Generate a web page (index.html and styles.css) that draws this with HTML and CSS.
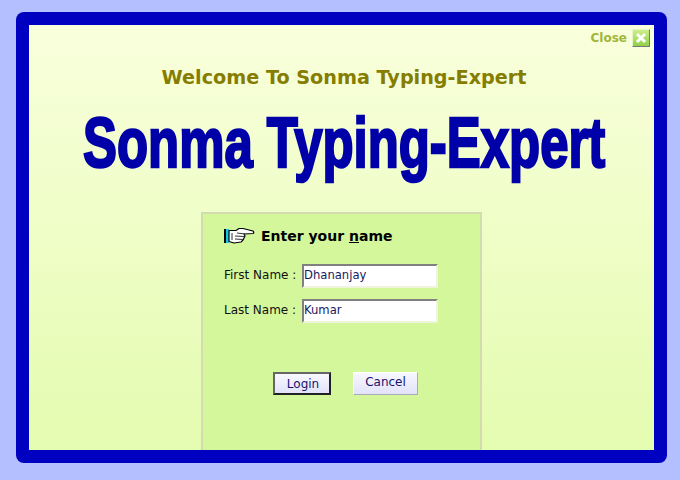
FILE: index.html
```html
<!DOCTYPE html>
<html lang="en">
<head>
<meta charset="utf-8">
<title>Sonma Typing-Expert</title>
<link rel="stylesheet" href="styles.css">
</head>
<body>
<main class="frame">
  <div class="inner">
    <div class="close-row">
      <span class="close-label">Close</span>
      <span class="close-btn"><svg width="14" height="14" viewBox="0 0 14 14"><path d="M3 3 L11 11 M11 3 L3 11" stroke="#fff" stroke-width="3" fill="none"/></svg></span>
    </div>
    <h2 class="welcome">Welcome To Sonma Typing-Expert</h2>
    <h1 class="logo"><span class="logo-text">Sonma Typing-Expert</span></h1>
    <form class="panel">
      <div class="panel-head">
        <svg class="hand" width="31" height="18" viewBox="0 0 31 18">
          <rect x="0" y="2" width="2" height="14" fill="#000"/>
          <rect x="2" y="2" width="3" height="14" fill="#14c8d8"/>
          <path d="M5 3.5 L12 3.5 L15 1.5 L19 1.5 L29 4 Q30.5 5.5 29 6.5 L20 7 L21 9 L20 11 L19 13 L17 15 L10 16 L5 14.5 Z" fill="#fff" stroke="#000" stroke-width="1.2" stroke-linejoin="round"/>
          <path d="M13 6 L21 7 M11 9 L20 9.5 M11 12 L19 12.5 M8 6 L8 13" stroke="#333" stroke-width="1" fill="none"/>
        </svg>
        <span class="panel-title">Enter your <u>n</u>ame</span>
      </div>
      <div class="field first">
        <label class="field-label" for="fn">First Name :</label>
        <input class="field-input" id="fn" type="text" value="Dhananjay">
      </div>
      <div class="field">
        <label class="field-label" for="ln">Last Name :</label>
        <input class="field-input" id="ln" type="text" value="Kumar">
      </div>
      <div class="actions">
        <button class="btn btn-default" type="button">Login</button>
        <button class="btn" type="button">Cancel</button>
      </div>
    </form>
  </div>
</main>
</body>
</html>
```
FILE: styles.css
```css
html, body {
  margin: 0;
  padding: 0;
  height: 480px;
  overflow: hidden;
  background: #b4bfff;
}
.frame {
  box-sizing: border-box;
  width: 651px;
  height: 451px;
  margin: 12px 0 0 16px;
  padding: 13px;
  background: #0000c0;
  border-radius: 8px;
  float: left;
}
.inner {
  height: 425px;
  display: flex;
  flex-direction: column;
  align-items: center;
  background: linear-gradient(#f9ffdc, #e4fcb0);
  font-family: "DejaVu Sans", Verdana, sans-serif;
}
.close-row {
  align-self: stretch;
  display: flex;
  justify-content: flex-end;
  align-items: center;
  gap: 5px;
  height: 18px;
  padding: 4px 4px 0 0;
}
.close-label {
  font-size: 12px;
  font-weight: bold;
  color: #a2b63a;
}
.close-btn {
  box-sizing: border-box;
  width: 18px;
  height: 18px;
  display: flex;
  align-items: center;
  justify-content: center;
  background: linear-gradient(#cdee8a, #8fd04a);
  border: 1px solid;
  border-color: #e8f5c8 #777 #777 #e8f5c8;
}
.welcome {
  margin: 19px 0 0;
  padding-left: 5px;
  font-size: 19.2px;
  line-height: 24px;
  font-weight: bold;
  color: #857d00;
  white-space: nowrap;
}
.logo {
  box-sizing: border-box;
  margin: 13px 0 0;
  padding-left: 5px;
  height: 109px;
  line-height: 81px;
  font-family: "Liberation Sans", Arial, sans-serif;
  font-size: 70px;
  font-weight: bold;
  color: #0000a8;
  white-space: nowrap;
  display: flex;
  justify-content: center;
  width: 100%;
}
.logo-text {
  display: inline-block;
  transform: scaleX(0.727);
  -webkit-text-stroke: 2.5px #0000a8;
}
.panel {
  box-sizing: border-box;
  width: 281px;
  flex: 1;
  background: #d4f79c;
  border: 2px solid #d3dcae;
  border-bottom: 0;
  padding: 11px 0 0 21px;
}
.panel-head {
  display: flex;
  align-items: center;
  gap: 6px;
  height: 22px;
}
.panel-title {
  font-size: 14px;
  font-weight: bold;
  color: #000;
}
.field {
  display: flex;
  align-items: center;
  margin-top: 11px;
  height: 24px;
}
.field.first {
  margin-top: 17px;
}
.field-label {
  width: 78px;
  padding-bottom: 3px;
  font-size: 12px;
  color: #111;
  white-space: nowrap;
}
.field-input {
  box-sizing: border-box;
  width: 136px;
  height: 24px;
  padding: 0 0 3px 0;
  background: #fff;
  border: 2px solid;
  border-color: #808080 #eef5dc #eef5dc #808080;
  font-family: "DejaVu Sans", Verdana, sans-serif;
  font-size: 11.6px;
  color: #1a1a60;
  outline: none;
}
.actions {
  display: flex;
  gap: 22px;
  margin: 49px 0 0 49px;
}
.btn {
  box-sizing: border-box;
  width: 65px;
  height: 23px;
  padding: 0 0 3px;
  background: linear-gradient(#f8f8ff, #e2e2fa);
  border: 1px solid;
  border-color: #fff #aab #aab #fff;
  font-family: "DejaVu Sans", Verdana, sans-serif;
  font-size: 12px;
  color: #14146e;
}
.btn-default {
  width: 58px;
  border: 2px solid;
  border-color: #666 #222 #222 #666;
  padding: 1px 0 0 2px;
}
```
